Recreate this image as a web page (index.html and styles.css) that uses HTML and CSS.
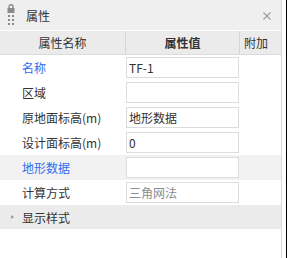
FILE: index.html
```html
<!DOCTYPE html>
<html lang="zh-CN">
<head>
  <meta charset="UTF-8" />
  <title>属性</title>
  <link rel="stylesheet" href="styles.css">
</head>
<body>
  <div class="frame">
    <div class="panel">
      <div class="titlebar">
        <div class="grip">
          <svg width="8" height="9" viewBox="0 0 8 9">
            <path d="M2 4V2.8a2 2 0 0 1 4 0V4" fill="none" stroke="#8a8a8a" stroke-width="1.4"/>
            <rect x="0.5" y="4" width="7" height="5" fill="#8a8a8a"/>
          </svg>
          <div class="dots">
            <i></i><i></i><i></i><i></i><i></i><i></i>
          </div>
        </div>
        <span class="title">属性</span>
        <span class="close">
          <svg width="8" height="8" viewBox="0 0 8 8">
            <path d="M0.5 0.5L7.5 7.5M7.5 0.5L0.5 7.5" stroke="#9a9a9a" stroke-width="1.1"/>
          </svg>
        </span>
      </div>

      <div class="head">
        <div class="hcell">属性名称</div>
        <div class="hcell strong">属性值</div>
        <div class="hcell extra">附加</div>
      </div>

      <div class="row">
        <div class="label link">名称</div>
        <div class="val"><input type="text" value="TF-1"></div>
      </div>
      <div class="row">
        <div class="label">区域</div>
        <div class="val"><input type="text" value=""></div>
      </div>
      <div class="row">
        <div class="label">原地面标高(m)</div>
        <div class="val"><input type="text" value="地形数据"></div>
      </div>
      <div class="row">
        <div class="label">设计面标高(m)</div>
        <div class="val"><input type="text" value="0"></div>
      </div>
      <div class="row shade">
        <div class="label link">地形数据</div>
        <div class="val"><input type="text" value=""></div>
      </div>
      <div class="row">
        <div class="label">计算方式</div>
        <div class="val"><input type="text" class="off" value="三角网法" readonly></div>
      </div>
      <div class="group">
        <span class="arrow"></span>
        <span>显示样式</span>
      </div>
    </div>
  </div>
</body>
</html>
```

FILE: styles.css
```css
body {
  margin: 0;
  font-family: "Noto Sans CJK SC", "Noto Sans", sans-serif;
  font-size: 12px;
  color: #333;
  background: #fff;
}
.frame {
  width: 286px;
  height: 258px;
  border-right: 1px solid #000;
}
.panel {
  width: 281px;
  height: 258px;
  border-right: 1px solid #d9d9d9;
  background: #fff;
}
.titlebar {
  height: 30px;
  background: #efefef;
  display: flex;
  align-items: center;
  border-bottom: 1px solid #fff;
}
.grip {
  width: 26px;
  padding-left: 7px;
  box-sizing: border-box;
  align-self: flex-start;
  padding-top: 4px;
}
.grip svg {
  display: block;
}
.dots {
  display: grid;
  grid-template-columns: 2px 2px;
  column-gap: 2px;
  row-gap: 2px;
  margin-top: 2px;
  margin-left: 1px;
}
.dots i {
  display: block;
  width: 2px;
  height: 2px;
  background: #8a8a8a;
}
.title {
  flex: 1;
  color: #333;
}
.close {
  padding-right: 10px;
  padding-top: 2px;
}
.close svg {
  display: block;
}
.head {
  display: grid;
  grid-template-columns: 126px 114px 1fr;
  height: 23px;
  background: #ebebeb;
  border-bottom: 1px solid #dcdcdc;
}
.hcell {
  text-align: center;
  line-height: 23px;
  border-right: 1px solid #d6d6d6;
}
.hcell.strong {
  font-weight: bold;
}
.hcell.extra {
  border-right: none;
  text-align: left;
  padding-left: 4px;
}
.row {
  display: grid;
  grid-template-columns: 126px 114px 1fr;
  height: 25px;
  align-items: center;
}
.row.shade {
  background: #f2f2f2;
}
.label {
  padding-left: 22px;
}
.label.link {
  color: #2f6cf0;
}
.val input {
  display: block;
  box-sizing: border-box;
  width: 113px;
  height: 21px;
  margin: 0;
  padding: 0 2px;
  border: 1px solid #dcdcdc;
  background: #fff;
  font-family: inherit;
  font-size: 12px;
  color: #333;
  outline: none;
}
.val input.off {
  color: #8c8c8c;
}
.group {
  height: 24px;
  background: #ebebeb;
  display: flex;
  align-items: center;
}
.arrow {
  width: 0;
  height: 0;
  margin: 0 8px 0 11px;
  border-top: 2.5px solid transparent;
  border-bottom: 2.5px solid transparent;
  border-left: 3px solid #999;
}
```
